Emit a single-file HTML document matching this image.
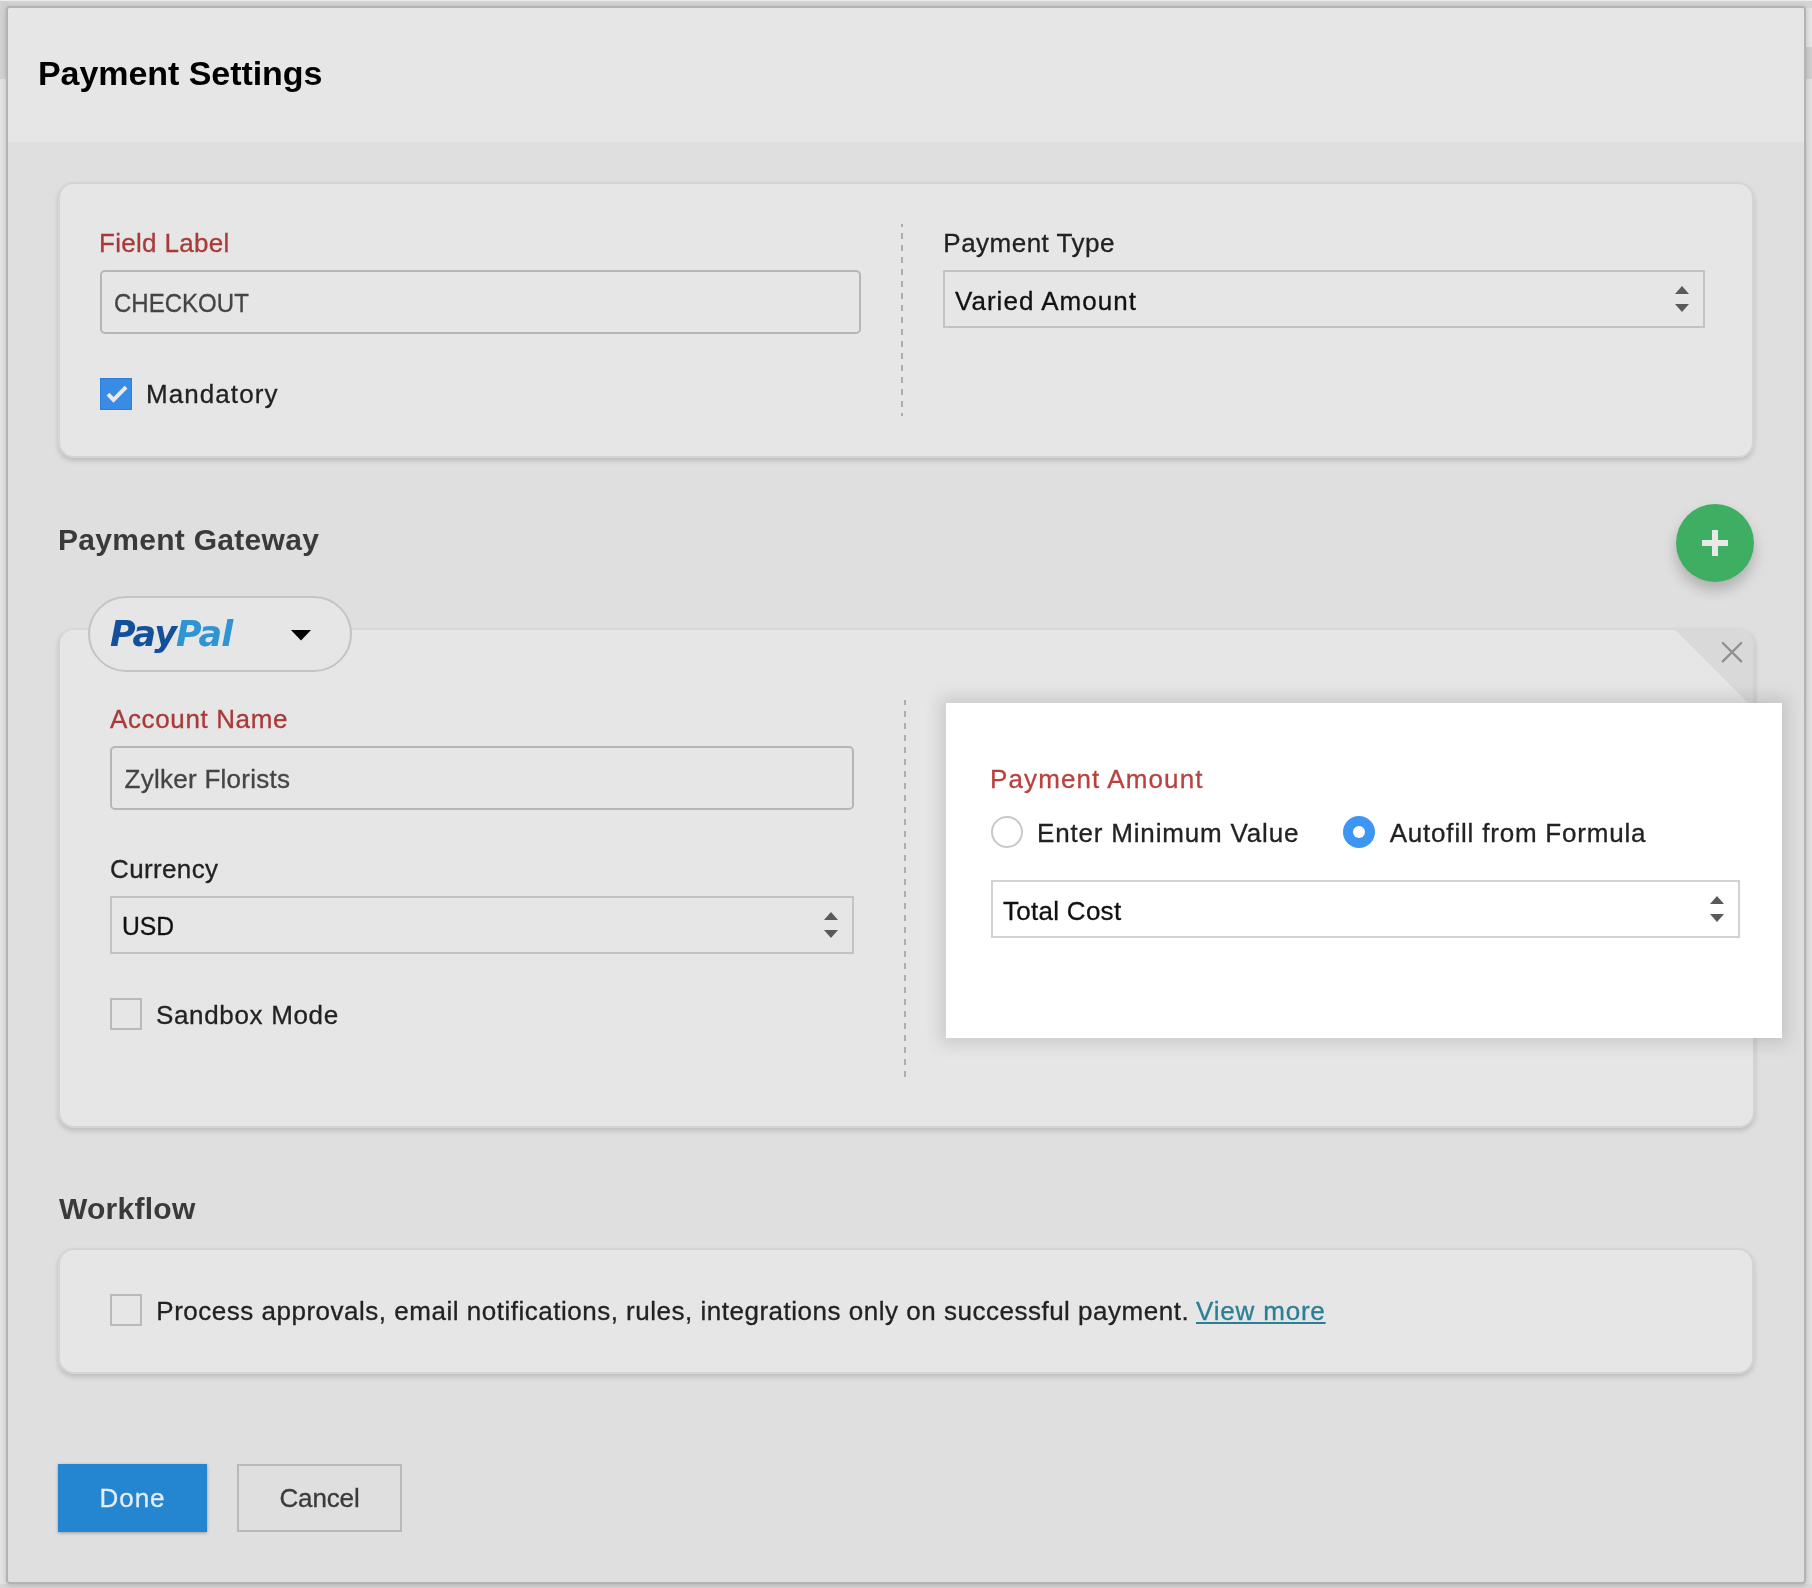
<!DOCTYPE html>
<html lang="en">
<head>
<meta charset="utf-8">
<title>Payment Settings</title>
<style>
*{box-sizing:border-box;margin:0;padding:0}
html,body{width:1812px;height:1588px;overflow:hidden}
body{position:relative;background:#e3e3e3;font-family:"Liberation Sans",sans-serif;color:#222;font-size:26px}
.abs{position:absolute}
.bgtop{left:0;top:0;width:1812px;height:1px;background:#ececec}
.bgl{left:0;top:1px;width:8px;height:78px;background:#d1d1d1}
.bgt{left:0;top:1px;width:1812px;height:7px;background:#d4d4d4}
.bgr{left:1804px;top:47px;width:8px;height:32px;background:#cdcdcd}
.bgr2{left:1804px;top:79px;width:8px;height:1509px;background:#dedede}
.bgb{left:0;top:1584px;width:1812px;height:4px;background:#d6d6d6}
.dialog{left:6px;top:6px;width:1800px;height:1578px;background:#dfdfdf;border:2px solid #b3b3b3;border-radius:4px;box-shadow:0 1px 5px rgba(0,0,0,.18)}
.header{left:8px;top:8px;width:1796px;height:134px;background:#e6e6e6;border-radius:2px 2px 0 0}
.title{left:38px;top:53px;font-size:34px;font-weight:bold;color:#000;line-height:40px;white-space:nowrap}
.card{background:#e6e6e6;border-radius:16px;border:2px solid #d4d4d4;box-shadow:0 3px 5px rgba(0,0,0,.15)}
.lbl{font-size:26px;line-height:32px;white-space:nowrap;color:#222;-webkit-text-stroke:.3px}
.red{color:#a93a3a}
.inp{border:2px solid #b6b6b6;border-radius:5px;background:#e6e6e6;font-size:26px;color:#444;white-space:nowrap;padding-left:12.5px;-webkit-text-stroke:.3px}
.sel{border:2px solid #c2c2c2;background:#e6e6e6;font-size:26px;color:#111;white-space:nowrap;padding-left:10px;-webkit-text-stroke:.3px}
.h2{font-size:30px;font-weight:bold;color:#3a3a3a;line-height:36px;white-space:nowrap}
.cb{width:32px;height:32px;border:2px solid #b9b9b9;background:#e6e6e6}
.vd{width:2px;background-image:linear-gradient(#adadad 50%,rgba(173,173,173,0) 50%);background-size:2px 12px;background-repeat:repeat-y}
.sel{position:absolute}
.ar{position:absolute;right:14px;top:14px;width:14px;height:26px}
.ar:before,.ar:after{content:"";position:absolute;left:0;border-left:7px solid transparent;border-right:7px solid transparent}
.ar:before{top:0;border-bottom:8px solid #5a5a5a}
.ar:after{top:18px;border-top:8px solid #5a5a5a}
</style>
</head>
<body>
<div class="abs bgt"></div>
<div class="abs bgtop"></div>
<div class="abs bgl"></div>
<div class="abs bgr2"></div>
<div class="abs bgr"></div>
<div class="abs bgb"></div>
<div class="abs dialog"></div>
<div class="abs header"></div>
<div id="layer" style="position:absolute;left:0;top:0;width:1812px;height:1588px;will-change:transform">
<div class="abs title"><span id="t_title" style="letter-spacing:-0.06px">Payment Settings</span></div>

<!-- card 1 -->
<div class="abs card" style="left:58px;top:182px;width:1696px;height:276px"></div>
<div class="abs lbl red" style="left:99px;top:227px"><span id="t_fl" style="letter-spacing:0.3px">Field Label</span></div>
<div class="abs inp" style="left:100px;top:270px;width:761px;height:64px;line-height:62px;padding-left:11.5px"><span id="t_co" style="display:inline-block;transform:scaleX(.924);transform-origin:0 50%">CHECKOUT</span></div>
<div class="abs" style="left:100px;top:378px;width:32px;height:32px;background:#3a8be4;border:1px solid #2b80e0">
<svg class="abs" style="left:-1px;top:-1px" width="32" height="32" viewBox="0 0 32 32"><path d="M8 16.1 L13.5 21.9 L26.1 9.1" fill="none" stroke="#ebe9e6" stroke-width="4" stroke-linecap="butt" stroke-linejoin="miter"/></svg>
</div>
<div class="abs lbl" style="left:146px;top:378px"><span id="t_ma" style="letter-spacing:1.07px">Mandatory</span></div>
<div class="abs vd" style="left:901px;top:224px;height:192px;background-position:0 -3px"></div>
<div class="abs lbl" style="left:943.3px;top:227px"><span id="t_pt" style="letter-spacing:0.49px">Payment Type</span></div>
<div class="abs sel" style="left:943px;top:270px;width:762px;height:58px;line-height:58px"><span id="t_va" style="letter-spacing:1.03px">Varied Amount</span><i class="ar"></i></div>

<!-- gateway -->
<div class="abs h2" style="left:58px;top:522px"><span id="t_pg" style="letter-spacing:0.29px">Payment Gateway</span></div>
<div class="abs" style="left:1676px;top:504px;width:78px;height:78px;border-radius:50%;background:#3eae63;box-shadow:0 8px 14px rgba(0,0,0,.22)"></div>
<div class="abs" style="left:1702px;top:540px;width:26px;height:6px;background:#e8e8e8"></div>
<div class="abs" style="left:1712px;top:530px;width:6px;height:26px;background:#e8e8e8"></div>

<div class="abs card" style="left:58px;top:628px;width:1697px;height:500px;overflow:hidden;border-color:#d8d8d8 #d3d3d3 #d3d3d3 #d3d3d3">
<svg class="abs" style="right:-2px;top:-2px" width="82" height="82" viewBox="0 0 82 82"><path d="M0 0 H82 V82 Z" fill="#d9d9d9"/><path d="M49.8 15 L68.2 33.4 M68.2 15 L49.8 33.4" stroke="#8f8f8f" stroke-width="2.3" stroke-linecap="round" fill="none"/></svg>
</div>
<div class="abs" style="left:88px;top:596px;width:264px;height:76px;border-radius:38px;border:2px solid #c4c4c4;background:#e6e6e6"></div>
<div class="abs" style="left:110px;top:611.5px;font-family:'DejaVu Sans','Liberation Sans',sans-serif;font-size:35px;font-weight:bold;font-style:italic;line-height:44px;white-space:nowrap;letter-spacing:-.9px"><span id="t_pp"><span style="color:#134f9b">Pay</span><span style="color:#2f95d2">Pal</span></span></div>
<svg class="abs" style="left:291px;top:630px" width="20" height="11" viewBox="0 0 20 11"><path d="M0 0 H20 L10 10.5 Z" fill="#000"/></svg>

<div class="abs lbl red" style="left:110px;top:703px"><span id="t_an" style="letter-spacing:0.63px">Account Name</span></div>
<div class="abs inp" style="left:110px;top:746px;width:744px;height:64px;line-height:63px"><span id="t_zf" style="letter-spacing:0.27px">Zylker Florists</span></div>
<div class="abs lbl" style="left:110px;top:853px"><span id="t_cu" style="letter-spacing:0.36px">Currency</span></div>
<div class="abs sel" style="left:110px;top:896px;width:744px;height:58px;line-height:57px"><span id="t_us" style="display:inline-block;transform:scaleX(.95);transform-origin:0 50%">USD</span><i class="ar"></i></div>
<div class="abs cb" style="left:110px;top:998px"></div>
<div class="abs lbl" style="left:156px;top:999px"><span id="t_sm" style="letter-spacing:0.66px">Sandbox Mode</span></div>
<div class="abs vd" style="left:904px;top:700px;height:377px;background-position:0 -1px"></div>

<!-- popup -->
<div class="abs" style="left:946px;top:703px;width:836px;height:335px;background:#fff;box-shadow:0 0 16px 6px rgba(0,0,0,.12)"></div>
<div class="abs lbl red" style="left:990px;top:763px;color:#b8423f"><span id="t_pa" style="letter-spacing:1.11px">Payment Amount</span></div>
<div class="abs" style="left:991px;top:816px;width:32px;height:32px;border-radius:50%;border:2px solid #c8c8c8;background:#fff"></div>
<div class="abs lbl" style="left:1037px;top:817px"><span id="t_em" style="letter-spacing:0.82px">Enter Minimum Value</span></div>
<div class="abs" style="left:1343px;top:816px;width:32px;height:32px;border-radius:50%;background:#3d96f2"></div>
<div class="abs" style="left:1353px;top:826px;width:12px;height:12px;border-radius:50%;background:#fff"></div>
<div class="abs lbl" style="left:1389.7px;top:817px"><span id="t_af" style="letter-spacing:0.8px">Autofill from Formula</span></div>
<div class="abs sel" style="left:991px;top:880px;width:749px;height:58px;line-height:58px;background:#fff;border-color:#d2d2d2"><span id="t_tc" style="letter-spacing:0.28px">Total Cost</span><i class="ar"></i></div>

<!-- workflow -->
<div class="abs h2" style="left:59px;top:1191px"><span id="t_wf" style="letter-spacing:0.26px">Workflow</span></div>
<div class="abs card" style="left:58px;top:1248px;width:1696px;height:126px"></div>
<div class="abs cb" style="left:110px;top:1294px"></div>
<div class="abs lbl" style="left:156.3px;top:1295px"><span id="t_pr" style="letter-spacing:0.51px">Process approvals, email notifications, rules, integrations only on successful payment.</span></div>
<div class="abs lbl" style="left:1196px;top:1295px"><span id="t_vm" style="letter-spacing:0.81px;color:#2a7f96;text-decoration:underline">View more</span></div>

<div class="abs" style="left:58px;top:1464px;width:149px;height:68px;background:#2485d0;color:#e4ecf4;font-size:26px;line-height:69px;text-align:center;-webkit-text-stroke:.3px;box-shadow:0 1px 3px rgba(0,0,0,.3)"><span id="t_do" style="letter-spacing:0.97px">Done</span></div>
<div class="abs" style="left:237px;top:1464px;width:165px;height:68px;border:2px solid #b9b9b9;background:#dfdfdf;color:#3a3a3a;font-size:26px;line-height:65px;text-align:center;-webkit-text-stroke:.3px"><span id="t_ca" style="letter-spacing:-0.14px">Cancel</span></div>
</div>
</body>
</html>
